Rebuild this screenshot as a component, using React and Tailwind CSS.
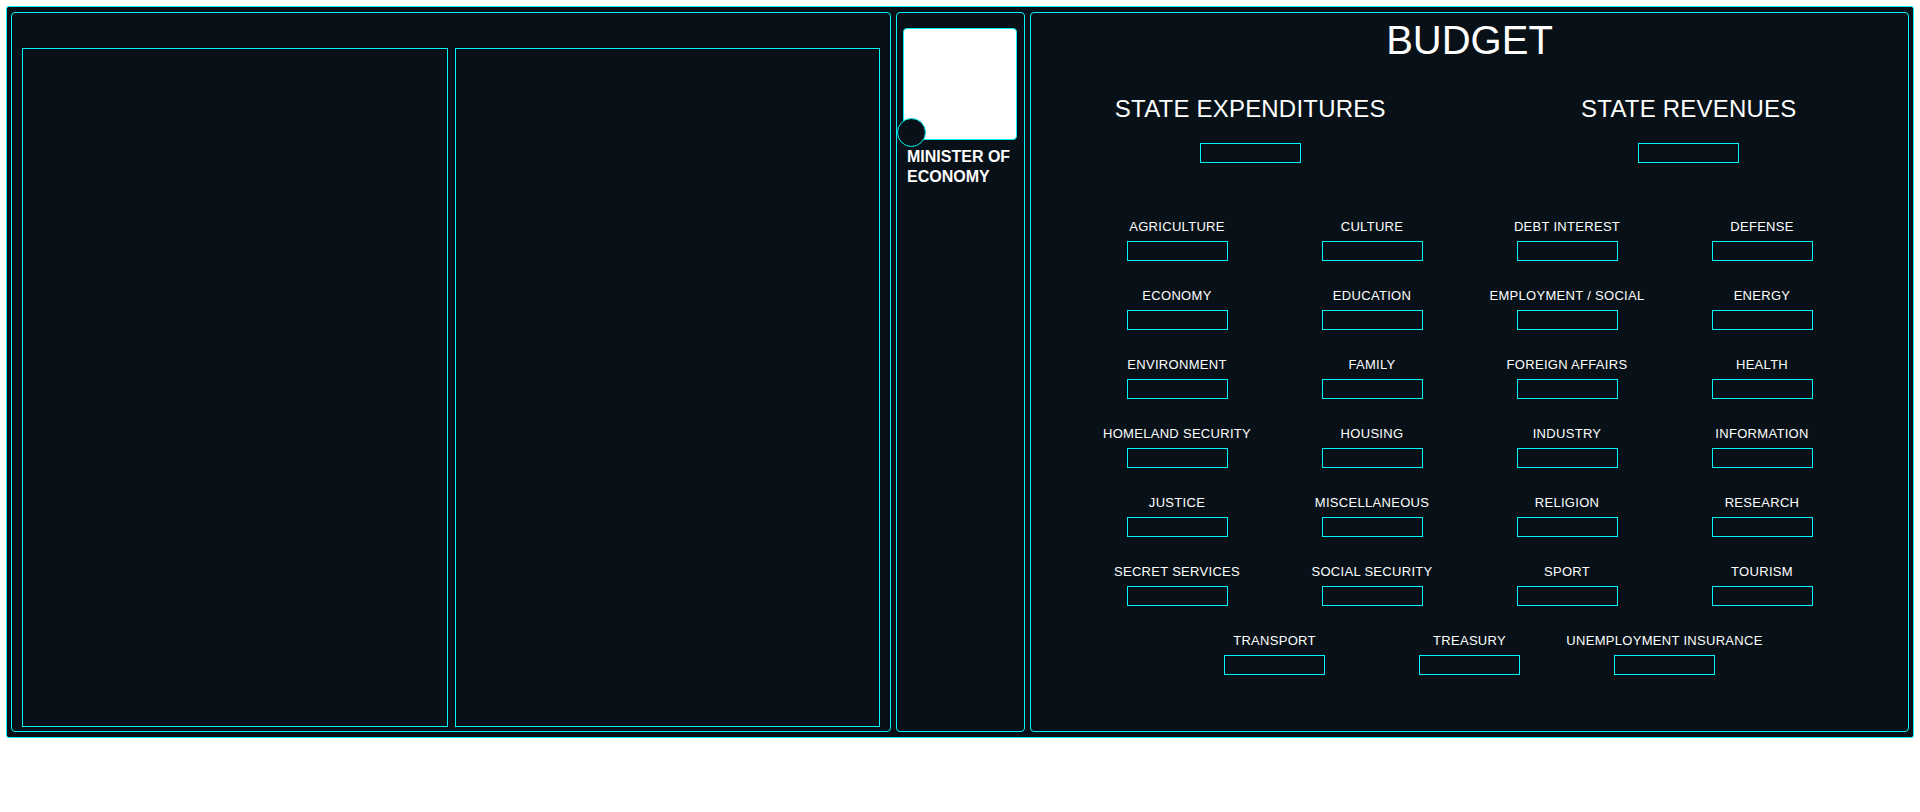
const expenditures = [
    "AGRICULTURE", "CULTURE", "DEBT INTEREST", "DEFENSE",
    "ECONOMY", "EDUCATION", "EMPLOYMENT / SOCIAL", "ENERGY",
    "ENVIRONMENT", "FAMILY", "FOREIGN AFFAIRS", "HEALTH",
    "HOMELAND SECURITY", "HOUSING", "INDUSTRY", "INFORMATION",
    "JUSTICE", "MISCELLANEOUS", "RELIGION", "RESEARCH",
    "SECRET SERVICES", "SOCIAL SECURITY", "SPORT", "TOURISM",
    "TRANSPORT", "TREASURY", "UNEMPLOYMENT INSURANCE",
];

const ValueBox = ({ className = "" }) => (
    <div className={`w-[101px] h-[20px] border border-[#00f6f6] bg-[#071117] ${className}`} />
);

const BudgetPanel = () => {
    return (
        <div className="w-[879px] h-full border border-[#00f6f6] rounded-[4px] flex flex-col items-center">
            <h1 className="mt-[7px] text-[40px] leading-none text-white">BUDGET</h1>

            <div className="mt-[37px] w-full flex">
                <div className="flex-1 flex flex-col items-center">
                    <span className="text-[24px] leading-none text-white tracking-[0.2px]">STATE EXPENDITURES</span>
                    <ValueBox className="mt-[22px]" />
                </div>
                <div className="flex-1 flex flex-col items-center">
                    <span className="text-[24px] leading-none text-white tracking-[0.2px]">STATE REVENUES</span>
                    <ValueBox className="mt-[22px]" />
                </div>
            </div>

            <div className="mt-[57px] w-[780px] flex flex-wrap justify-center gap-y-[28px]">
                {expenditures.map((name) => (
                    <div key={name} className="w-[195px] flex flex-col items-center">
                        <span className="text-[13px] leading-none text-white whitespace-nowrap tracking-[0.3px]">{name}</span>
                        <ValueBox className="mt-[8px]" />
                    </div>
                ))}
            </div>
        </div>
    );
};

const MinisterPanel = () => (
    <div className="w-[129px] h-full border border-[#00f6f6] rounded-[4px] flex flex-col px-[6px] pt-[15px]">
        <div className="relative w-[114px] h-[112px] bg-white border border-[#00f6f6] rounded-[4px]">
            <div className="absolute left-[-7px] bottom-[-8px] w-[29px] h-[29px] rounded-full bg-[#071117] border border-[#00f6f6]" />
        </div>
        <p className="mt-[7px] pl-[4px] text-[16px] leading-[20px] font-bold text-white">
            MINISTER OF<br />ECONOMY
        </p>
    </div>
);

export default function App() {
    return (
        <div className="m-[6px] w-[1908px] h-[732px] bg-[#071117] border border-[#00f6f6] rounded-[3px] px-[4px] py-[5px] flex gap-[5px] font-['Liberation_Sans',Arial,sans-serif]">
            <div className="w-[880px] h-full border border-[#00f6f6] rounded-[4px] flex gap-[7px] pt-[35px] pb-[4px] px-[10px]">
                <div className="flex-1 border border-[#00f6f6]" />
                <div className="flex-1 border border-[#00f6f6]" />
            </div>
            <MinisterPanel />
            <BudgetPanel />
        </div>
    );
}
